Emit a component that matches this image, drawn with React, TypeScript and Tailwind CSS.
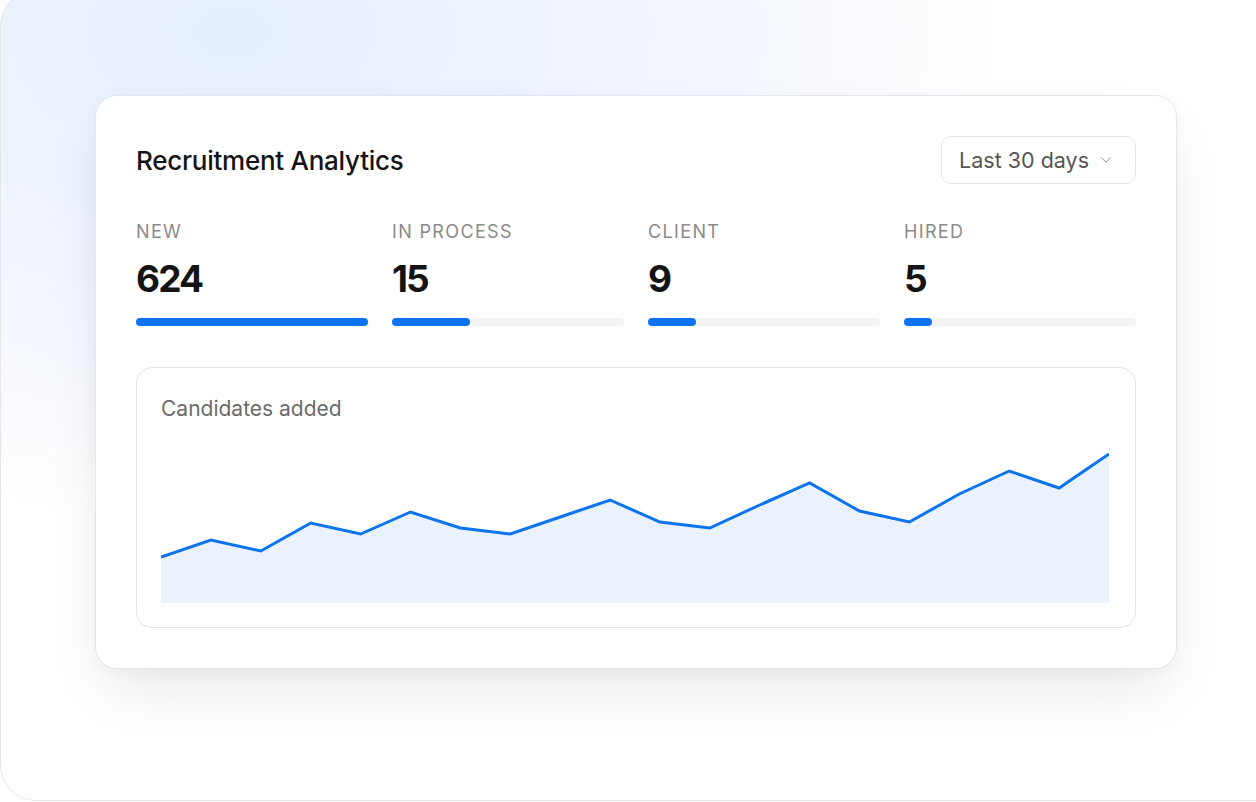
import { ChevronDown } from "lucide-react";

type Stat = { label: string; value: string; pct: number };

const stats: Stat[] = [
  { label: "New", value: "624", pct: 100 },
  { label: "In process", value: "15", pct: 33.6 },
  { label: "Client", value: "9", pct: 20.7 },
  { label: "Hired", value: "5", pct: 12 },
];

// y offsets (px from top of the plot) for each day sample
const series = [116, 99, 110, 82, 93, 71, 87, 93, 76, 59, 81, 87, 64, 42, 70, 81, 53, 30, 47, 13];

const CHART_W = 948;
const CHART_H = 162;

function AreaChart() {
  const step = CHART_W / (series.length - 1);
  const pts = series.map((y, i) => `${(i * step).toFixed(1)},${y}`);
  const line = `M${pts.join(" L")}`;
  const area = `${line} L${CHART_W},${CHART_H} L0,${CHART_H} Z`;

  return (
    <svg
      width={CHART_W}
      height={CHART_H}
      viewBox={`0 0 ${CHART_W} ${CHART_H}`}
      className="block"
    >
      <path d={area} fill="#eaf2fd" />
      <path
        d={line}
        fill="none"
        stroke="#0b72f0"
        strokeWidth={3}
        strokeLinejoin="miter"
        strokeLinecap="butt"
      />
    </svg>
  );
}

function StatColumn({ stat }: { stat: Stat }) {
  return (
    <div className="flex flex-col">
      <span className="text-[18px] leading-[22px] uppercase tracking-[0.075em] text-[#8a8a8a]">
        {stat.label}
      </span>
      <span className="mt-[16px] text-[37px] leading-[40px] font-bold tracking-[-0.05em] text-[#141414]">
        {stat.value}
      </span>
      <div className="mt-[19px] h-2 w-full rounded-full bg-[#f3f3f4]">
        <div
          className="h-2 rounded-full bg-[#0b72f0]"
          style={{ width: `${stat.pct}%` }}
        />
      </div>
    </div>
  );
}

export default function App() {
  return (
    <div
      className="h-[802px] w-[1256px] overflow-hidden bg-white"
      style={{ fontFamily: "Inter, 'Noto Sans', sans-serif" }}
    >
      <div className="-mt-[10px] h-[811px] w-[1320px] rounded-[36px] border border-[#e6e6e6] bg-[radial-gradient(ellipse_1000px_640px_at_230px_40px,#e5eefd_0%,#f2f6fe_45%,#ffffff_78%)] pl-[94px] pt-[104px]">
        <div className="w-[1082px] rounded-[22px] border border-[#e3e6ec] bg-white p-10 shadow-[0_28px_60px_-12px_rgba(0,0,0,0.10),0_4px_14px_rgba(0,0,0,0.03)]">
          <div className="flex h-12 items-center justify-between">
            <h1 className="text-[26px] font-medium tracking-[-0.01em] text-[#141414]">
              Recruitment Analytics
            </h1>
            <button
              type="button"
              className="flex h-12 items-center gap-2 rounded-[10px] border border-[#e5e5e5] bg-white pl-[17px] pr-[20px] text-[21.5px] text-[#555555]"
            >
              Last 30 days
              <ChevronDown size={18} strokeWidth={1.3} className="text-[#8c8c8c]" />
            </button>
          </div>

          <div className="mt-[37px] grid grid-cols-4 gap-6">
            {stats.map((s) => (
              <StatColumn key={s.label} stat={s} />
            ))}
          </div>

          <div className="mt-[41px] rounded-[16px] border border-[#e5e5e5] bg-white px-6 pb-6 pt-[27px]">
            <p className="text-[21px] leading-[28px] text-[#6b6b6b]">Candidates added</p>
            <div className="mt-[18px]">
              <AreaChart />
            </div>
          </div>
        </div>
      </div>
    </div>
  );
}
